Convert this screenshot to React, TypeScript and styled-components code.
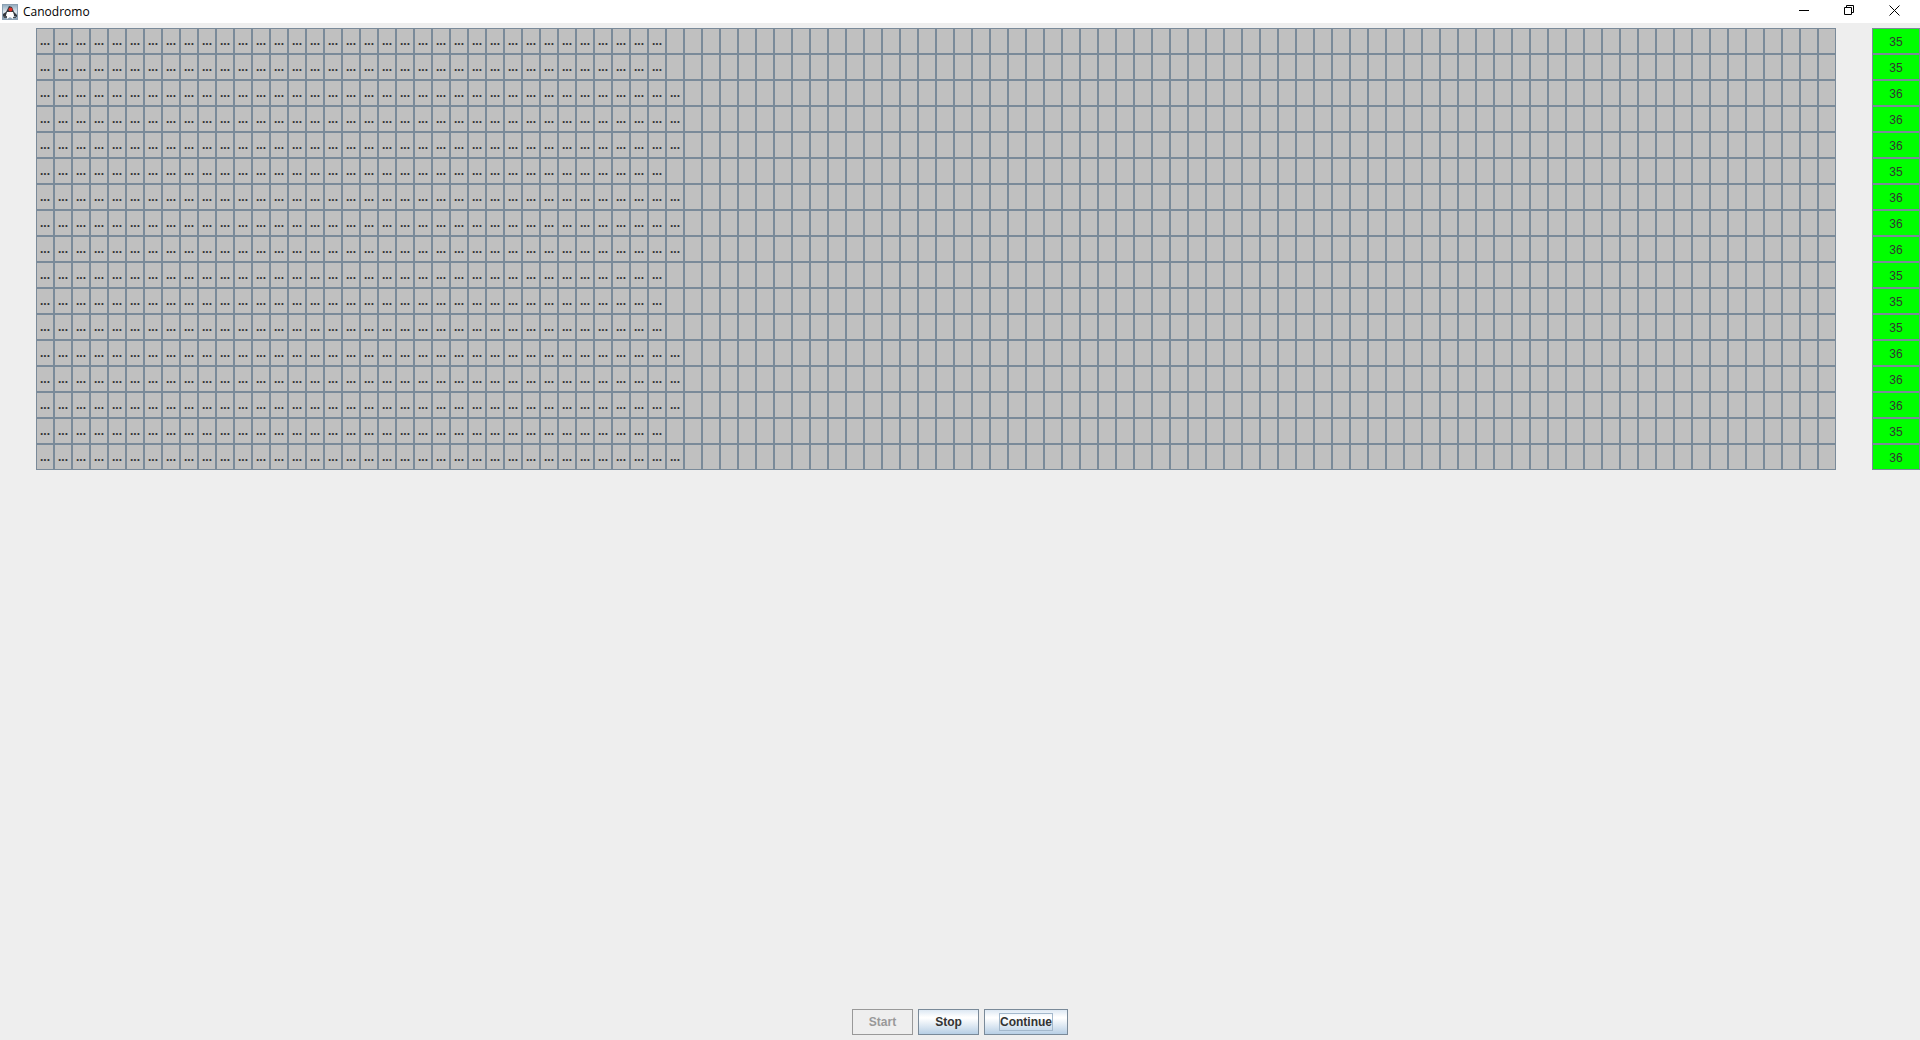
import React from "react";
import styled, { createGlobalStyle, css } from "styled-components";

const GlobalStyle = createGlobalStyle`
  *, *::before, *::after { box-sizing: border-box; }
  body { margin: 0; background: #eeeeee; }
`;

const Window = styled.div`
  display: flex;
  flex-direction: column;
  min-height: 100vh;
  color: #333333;
  font: bold 12px "Liberation Sans", Arial, sans-serif;
`;

const TitleBar = styled.header`
  display: flex;
  align-items: center;
  height: 23px;
  padding: 0 3px 0 2px;
  background: #ffffff;
  color: #000000;
`;

const Title = styled.h1`
  flex: 1;
  margin: 0 0 0 5px;
  font: 12px/22px "Open Sans", "Segoe UI", sans-serif;
`;

const WindowControls = styled.div`
  display: flex;
  align-self: flex-start;
`;

const WindowButton = styled.button`
  display: flex;
  align-items: center;
  justify-content: center;
  width: 45px;
  height: 21px;
  padding: 0;
  border: 0;
  background: transparent;
`;

const Board = styled.main`
  flex: 1;
  padding-top: 5px;
`;

const Lane = styled.div`
  display: flex;
  gap: 36px;
  height: 26px;
  padding-left: 36px;
`;

const Track = styled.div`
  flex: 1;
  display: grid;
  grid-template-columns: repeat(100, minmax(0, 1fr));
`;

const Step = styled.div`
  border: 1px solid #7a8a99;
  background: #c0c0c0;
  line-height: 24px;
  text-align: center;
`;

const Counter = styled.output`
  width: 48px;
  padding-top: 1px;
  border: 1px solid #7a8a99;
  background: #00ff00;
  font-weight: normal;
  line-height: 24px;
  text-align: center;
`;

const Actions = styled.footer`
  display: flex;
  justify-content: center;
  gap: 5px;
  padding: 5px;
`;

const ActionButton = styled.button<{ $current?: boolean }>`
  min-width: 61px;
  height: 26px;
  padding: 0 14px;
  border: 1px solid #7a8a99;
  background: linear-gradient(#dde8f3 0%, #ffffff 30%, #ffffff 34%, #b8cfe5 100%);
  color: #333333;
  font: inherit;
  &:disabled {
    border-color: #999999;
    background: #eeeeee;
    color: #999999;
  }
  span {
    display: block;
    border: 1px solid transparent;
    line-height: 16px;
    ${(p) => p.$current && css`border-color: #a3b8cc;`}
  }
`;

const JavaIcon = () => (
  <svg width="16" height="16" viewBox="0 0 16 16" aria-hidden="true">
    <defs>
      <linearGradient id="sky" x1="0" y1="0" x2="0" y2="1">
        <stop offset="0" stopColor="#8fa9bd" />
        <stop offset="0.5" stopColor="#dfe8ee" />
        <stop offset="1" stopColor="#7f9bb1" />
      </linearGradient>
    </defs>
    <rect x="0.5" y="0.5" width="15" height="15" fill="url(#sky)" stroke="#8ba0b2" />
    <path d="M7 2L10 3L12 8L15 11V13L12 12L10 9L5 9L4 12L1 12V10L4 8Z" fill="#34383d" />
    <path d="M5 8L11 8L12 11L11 15L8 13L5 15L4 12Z" fill="#ffffff" />
    <path d="M1 12H5V14H2ZM11 13H14V14H11Z" fill="#4b5259" />
    <circle cx="8.5" cy="5.5" r="2" fill="#e03028" />
  </svg>
);

const lanes = [35, 35, 36, 36, 36, 35, 36, 36, 36, 35, 35, 35, 36, 36, 36, 35, 36];
const trackSteps = Array.from({ length: 100 }, (_, i) => i);

export default function App() {
  return (
    <>
      <GlobalStyle />
      <Window>
        <TitleBar>
          <JavaIcon />
          <Title>Canodromo</Title>
          <WindowControls>
            <WindowButton aria-label="Minimize">
              <svg width="11" height="11" viewBox="0 0 11 11" stroke="#000000"><path d="M0 5.5H10" /></svg>
            </WindowButton>
            <WindowButton aria-label="Restore">
              <svg width="11" height="11" viewBox="0 0 11 11" fill="none" stroke="#000000"><path d="M0.5 2.5H7.5V9.5H0.5ZM2.5 2.5V0.5H9.5V7.5H7.5" /></svg>
            </WindowButton>
            <WindowButton aria-label="Close">
              <svg width="11" height="11" viewBox="0 0 11 11" stroke="#000000"><path d="M0.5 0.5L10.5 10.5M10.5 0.5L0.5 10.5" /></svg>
            </WindowButton>
          </WindowControls>
        </TitleBar>
        <Board>
          {lanes.map((count, lane) => (
            <Lane key={lane}>
              <Track>
                {trackSteps.map((step) => (
                  <Step key={step}>{step < count ? "..." : null}</Step>
                ))}
              </Track>
              <Counter>{count}</Counter>
            </Lane>
          ))}
        </Board>
        <Actions>
          <ActionButton disabled><span>Start</span></ActionButton>
          <ActionButton><span>Stop</span></ActionButton>
          <ActionButton $current><span>Continue</span></ActionButton>
        </Actions>
      </Window>
    </>
  );
}
